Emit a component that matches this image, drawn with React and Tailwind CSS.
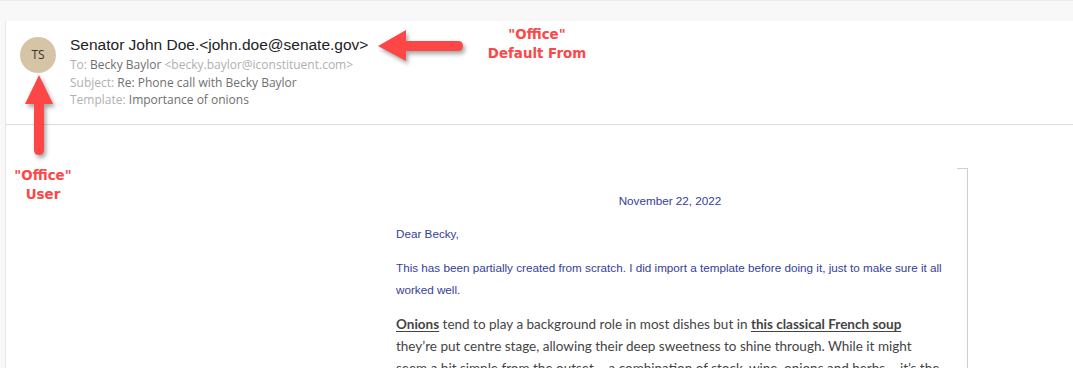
import React from "react";

const Arrow = ({ dir, className }) =>
  dir === "left" ? (
    <svg width="90" height="40" viewBox="0 0 90 40" className={className}>
      <path
        d="M2 19 L30 3 L30 14 L82 14 Q87 14 87 19 Q87 24 82 24 L30 24 L30 34 Z"
        fill="#fd4646"
      />
    </svg>
  ) : (
    <svg width="34" height="84" viewBox="0 0 34 84" className={className}>
      <path
        d="M16 1 L30 30 L21 30 L21 76 Q21 81 16 81 Q11 81 11 76 L11 30 L2 30 Z"
        fill="#fd4646"
      />
    </svg>
  );

const Note = ({ children, className }) => (
  <div
    className={`absolute text-center text-[13.4px] leading-[19px] font-bold text-[#fd4646] ${className}`}
    style={{ fontFamily: '"DejaVu Sans", sans-serif' }}
  >
    {children}
  </div>
);

const meta = [
  { label: "To:", value: "Becky Baylor", extra: " <becky.baylor@iconstituent.com>" },
  { label: "Subject:", value: "Re: Phone call with Becky Baylor" },
  { label: "Template:", value: "Importance of onions" },
];

const App = () => {
  return (
    <div className="relative w-[1073px] h-[368px] overflow-hidden bg-[#f8f8f8] pt-5 pl-[5px] border-t border-[#ececec]">
      <div className="bg-white h-full border-l border-[#e6e6e6]">
        {/* header */}
        <div className="h-[104px] border-b border-[#dcdcdc] flex items-start pl-[14px] pt-[14px] gap-[14px]">
          <div
            className="mt-[2px] w-9 h-9 rounded-full bg-[#d6c4a6] flex items-center justify-center text-[12px] text-[#333]"
            style={{ fontFamily: '"Open Sans", sans-serif' }}
          >
            TS
          </div>
          <div>
            <p
              className="text-[15.5px] leading-[20px] text-[#222]"
              style={{ fontFamily: '"Liberation Sans", Arial, sans-serif' }}
            >
              Senator John Doe.&lt;john.doe@senate.gov&gt;
            </p>
            <div
              className="mt-[1px] text-[12px] leading-[17.5px]"
              style={{ fontFamily: '"Open Sans", sans-serif' }}
            >
              {meta.map(({ label, value, extra }) => (
                <p key={label} className="text-[#b0b0b0]">
                  {label} <span className="text-[#6f6f6f]">{value}</span>
                  {extra && <span>{extra}</span>}
                </p>
              ))}
            </div>
          </div>
        </div>

        {/* letter */}
        <div className="mt-[43px] ml-[370px] w-[592px] border-r border-[#cfcfcf] pl-5 pr-[23px]">
          <div className="flex justify-end -mr-[23px]">
            <div className="w-[10px] border-t border-[#cfcfcf]" />
          </div>
          <div
            className="text-[11.7px] text-[#35419a]"
            style={{ fontFamily: '"Liberation Sans", Arial, sans-serif' }}
          >
            <p className="mt-[24px] leading-[16px] text-center">November 22, 2022</p>
            <p className="mt-[17px] leading-[16px]">Dear Becky,</p>
            <p className="mt-[15px] leading-[22px]">
              This has been partially created from scratch. I did import a template before doing it, just to make sure it all worked well.
            </p>
          </div>
          <p
            className="mt-[12px] text-[13.5px] leading-[22px] text-[#444]"
            style={{ fontFamily: "Lato, sans-serif" }}
          >
            <span className="font-bold underline underline-offset-2">Onions</span> tend to play a
            background role in most dishes but in{" "}
            <span className="font-bold underline underline-offset-2">this classical French soup</span>{" "}
            they’re put centre stage, allowing their deep sweetness to shine through. While it might
            seem a bit simple from the outset – a combination of stock, wine, onions and herbs – it’s the
            slow caramelisation that makes it special.
          </p>
        </div>
      </div>

      {/* annotations */}
      <Arrow dir="left" className="absolute left-[376px] top-[26px] drop-shadow-[2px_3px_2px_rgba(0,0,0,0.35)]" />
      <Note className="left-[482px] top-[24px] w-[110px]">
        "Office"
        <br />
        Default From
      </Note>
      <Arrow dir="up" className="absolute left-[23px] top-[73px] drop-shadow-[2px_3px_2px_rgba(0,0,0,0.35)]" />
      <Note className="left-[3px] top-[165px] w-[80px]">
        "Office"
        <br />
        User
      </Note>
    </div>
  );
};

export default App;
